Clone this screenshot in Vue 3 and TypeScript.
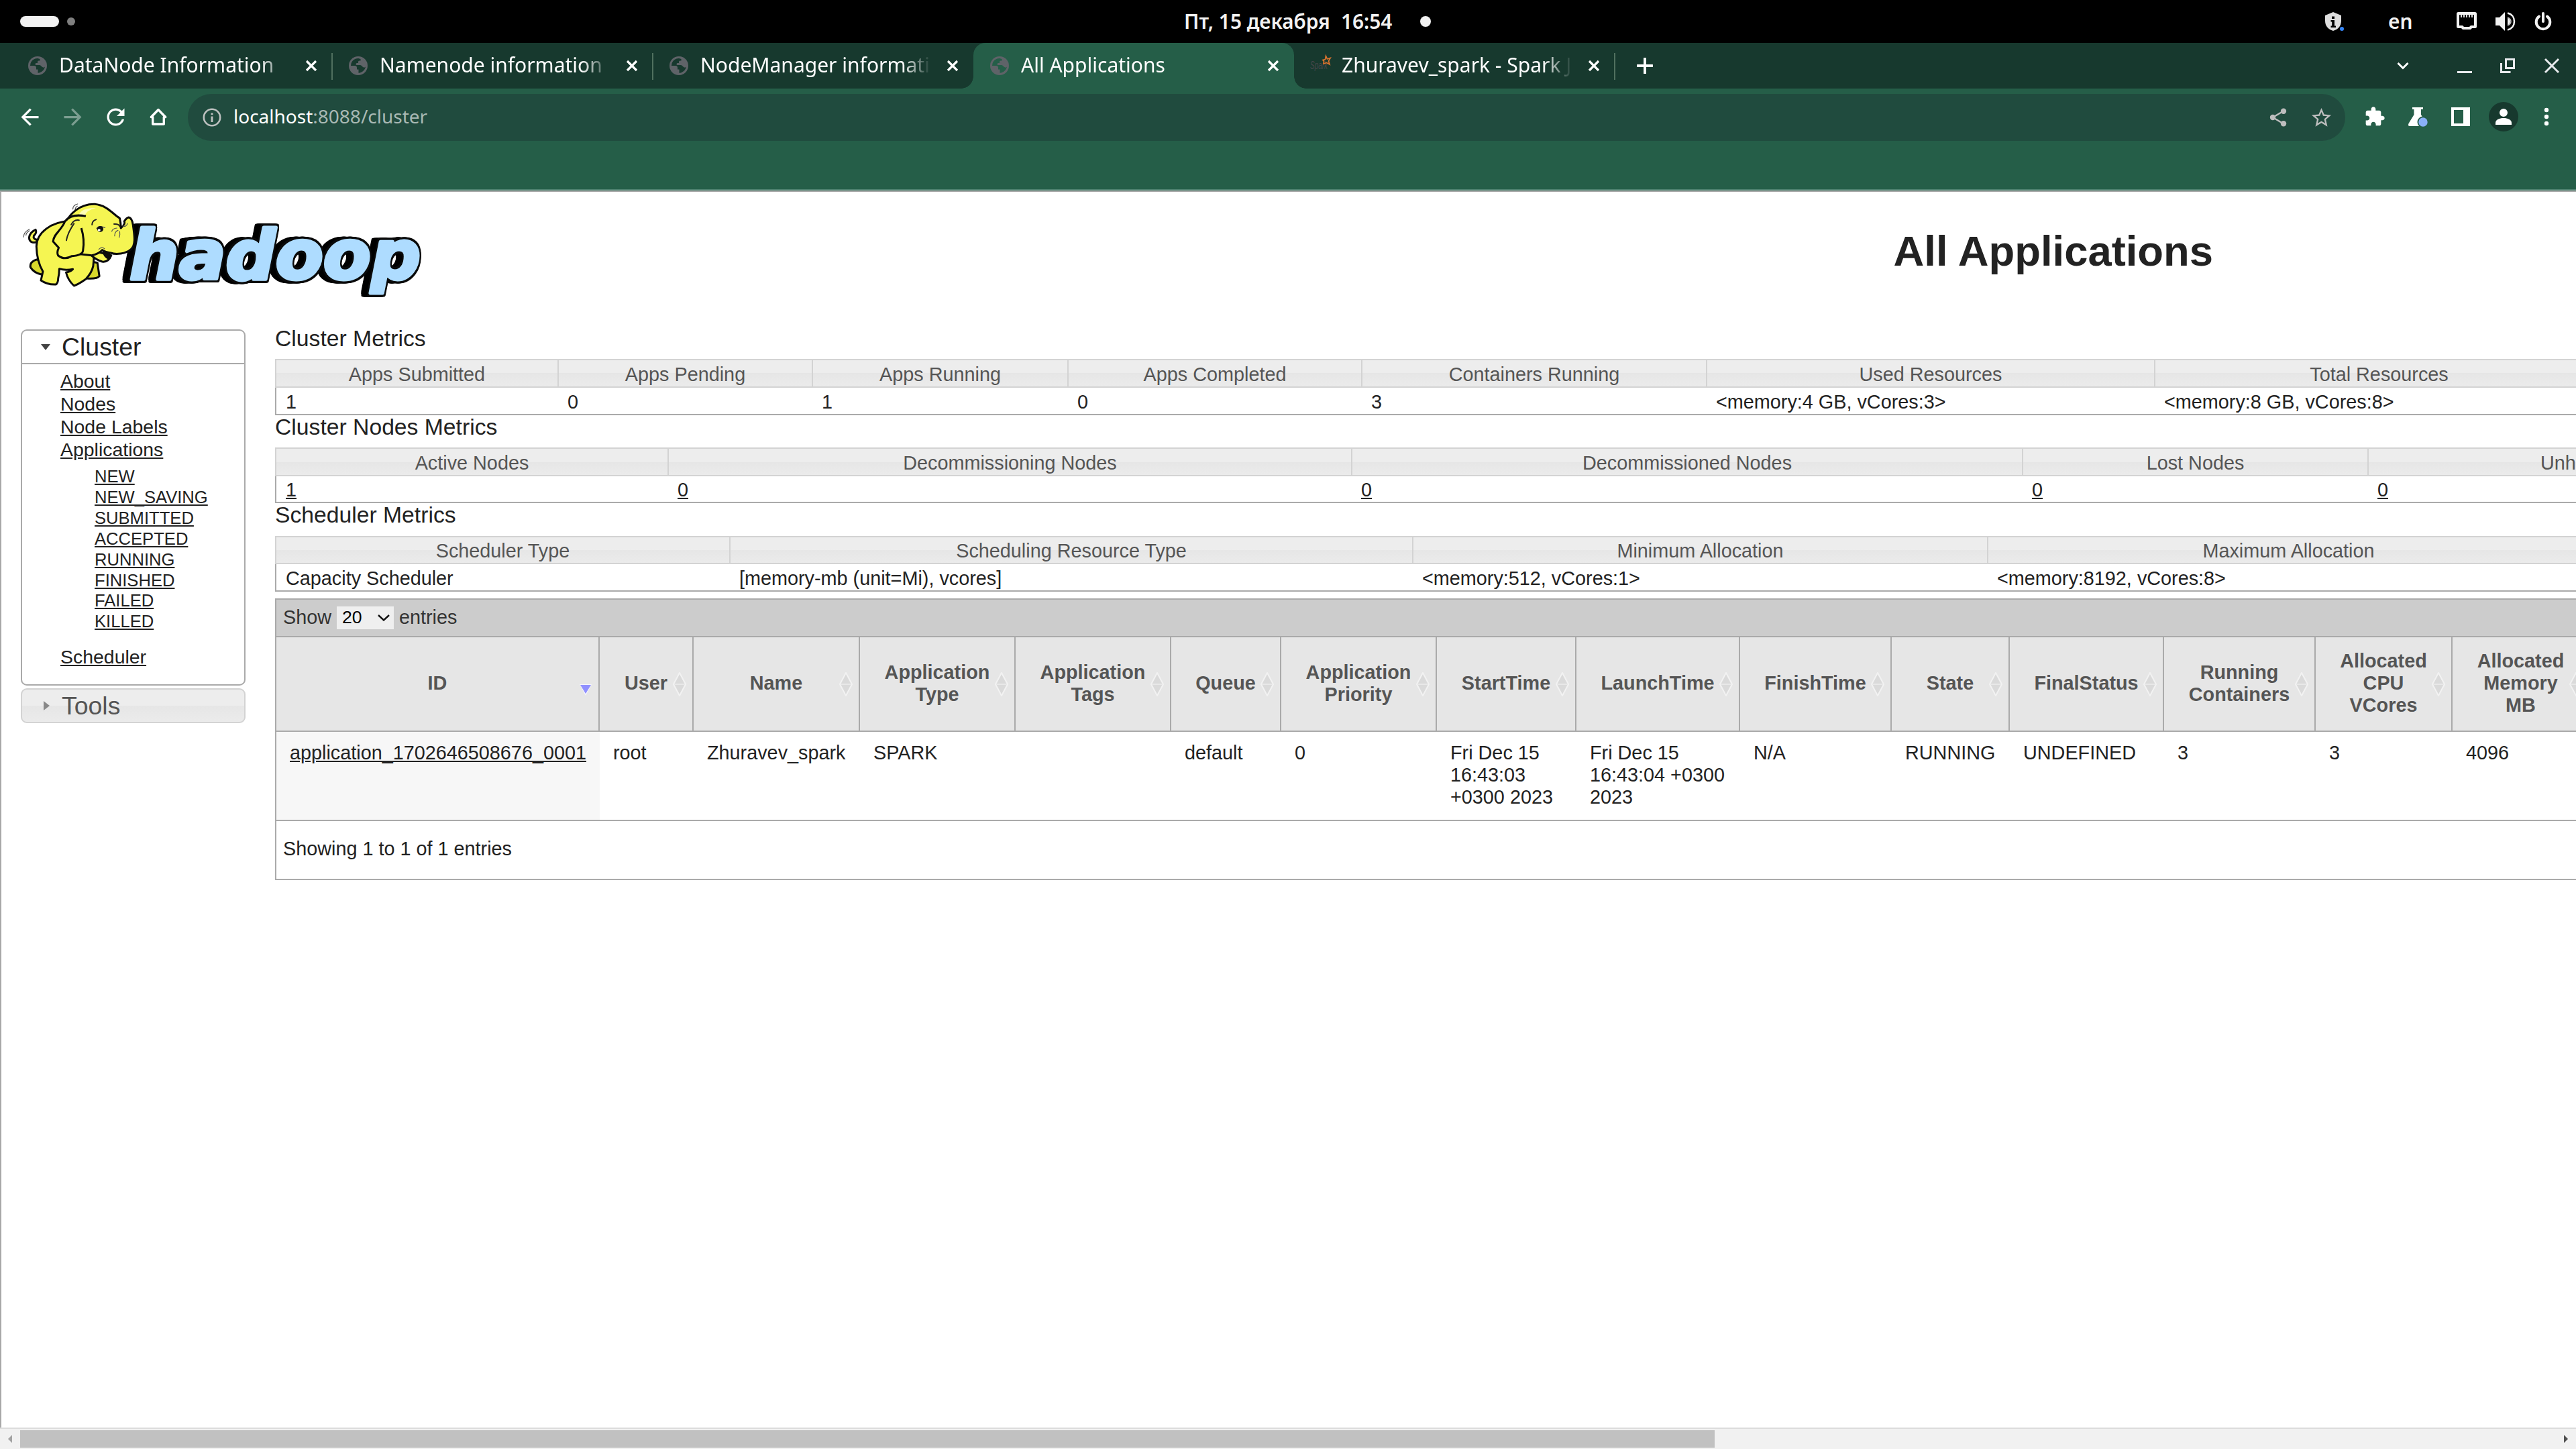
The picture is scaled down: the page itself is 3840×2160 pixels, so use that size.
<script setup lang="ts">
interface Tab {
  title: string
  icon: 'globe' | 'spark'
  active?: boolean
}

interface MetricCell {
  label: string
  value: string
  width: number
  link?: boolean
}

interface MetricTable {
  title: string
  kind: string
  cells: MetricCell[]
}

interface AppColumn {
  label: string[]
  value: string[]
  width: number
  sorted?: boolean
}

const tabs: Tab[] = [
  { title: 'DataNode Information', icon: 'globe' },
  { title: 'Namenode information', icon: 'globe' },
  { title: 'NodeManager informati', icon: 'globe' },
  { title: 'All Applications', icon: 'globe', active: true },
  { title: 'Zhuravev_spark - Spark J', icon: 'spark' },
]

const states: string[] = ['NEW', 'NEW_SAVING', 'SUBMITTED', 'ACCEPTED', 'RUNNING', 'FINISHED', 'FAILED', 'KILLED']

const metrics: MetricTable[] = [
  {
    title: 'Cluster Metrics',
    kind: 'cluster',
    cells: [
      { label: 'Apps Submitted', value: '1', width: 421 },
      { label: 'Apps Pending', value: '0', width: 379 },
      { label: 'Apps Running', value: '1', width: 381 },
      { label: 'Apps Completed', value: '0', width: 438 },
      { label: 'Containers Running', value: '3', width: 514 },
      { label: 'Used Resources', value: '<memory:4 GB, vCores:3>', width: 668 },
      { label: 'Total Resources', value: '<memory:8 GB, vCores:8>', width: 669 },
    ],
  },
  {
    title: 'Cluster Nodes Metrics',
    kind: 'nodes',
    cells: [
      { label: 'Active Nodes', value: '1', width: 585, link: true },
      { label: 'Decommissioning Nodes', value: '0', width: 1019, link: true },
      { label: 'Decommissioned Nodes', value: '0', width: 1000, link: true },
      { label: 'Lost Nodes', value: '0', width: 515, link: true },
      { label: 'Unhealthy Nodes', value: '0', width: 735, link: true },
    ],
  },
  {
    title: 'Scheduler Metrics',
    kind: 'scheduler',
    cells: [
      { label: 'Scheduler Type', value: 'Capacity Scheduler', width: 677 },
      { label: 'Scheduling Resource Type', value: '[memory-mb (unit=Mi), vcores]', width: 1018 },
      { label: 'Minimum Allocation', value: '<memory:512, vCores:1>', width: 857 },
      { label: 'Maximum Allocation', value: '<memory:8192, vCores:8>', width: 897 },
    ],
  },
]

const columns: AppColumn[] = [
  { label: ['ID'], value: ['application_1702646508676_0001'], width: 482, sorted: true },
  { label: ['User'], value: ['root'], width: 140 },
  { label: ['Name'], value: ['Zhuravev_spark'], width: 248 },
  { label: ['Application', 'Type'], value: ['SPARK'], width: 232 },
  { label: ['Application', 'Tags'], value: [], width: 232 },
  { label: ['Queue'], value: ['default'], width: 164 },
  { label: ['Application', 'Priority'], value: ['0'], width: 232 },
  { label: ['StartTime'], value: ['Fri Dec 15', '16:43:03', '+0300 2023'], width: 208 },
  { label: ['LaunchTime'], value: ['Fri Dec 15', '16:43:04 +0300', '2023'], width: 244 },
  { label: ['FinishTime'], value: ['N/A'], width: 226 },
  { label: ['State'], value: ['RUNNING'], width: 176 },
  { label: ['FinalStatus'], value: ['UNDEFINED'], width: 230 },
  { label: ['Running', 'Containers'], value: ['3'], width: 226 },
  { label: ['Allocated', 'CPU', 'VCores'], value: ['3'], width: 204 },
  { label: ['Allocated', 'Memory', 'MB'], value: ['4096'], width: 205 },
]
</script>

<template>
  <div class="desktop">
    <header class="panel">
      <div class="workspaces"><span class="ws-active"></span><span class="ws-dot"></span></div>
      <div class="clock"><span class="date">Пт, 15 декабря</span><span class="time">16:54</span><span class="notify"></span></div>
      <div class="tray">
        <svg class="tray-shield" width="30" height="30" viewBox="0 0 30 30">
          <path d="M13 1 L25 6 V14 C25 22 20 27 13 29 C6 27 1 22 1 14 V6 Z" fill="#dedede" />
          <path d="M11 7.5h4v3.5h-4zM9.500 13h5.500v8.500h2v2.500h-7.500v-2.500h1.700v-6h-1.700z" fill="#000" />
          <circle cx="26" cy="26" r="3" fill="#3584f4" />
        </svg>
        <span class="lang">en</span>
        <svg class="tray-net" width="30" height="28" viewBox="0 0 30 28">
          <path d="M2.500 0H27.500Q30 0 30 2.500V21.500Q30 24 27.500 24H23L21 26H9L7 24H2.500Q0 24 0 21.500V2.500Q0 0 2.500 0ZM4 4V20H9L11 22H19L21 20H26V4Z" fill="#f2f2f2" fill-rule="evenodd" />
          <path d="M7 4v4M11 4v4M15 4v4M19 4v4M23 4v4" stroke="#f2f2f2" stroke-width="1.800" />
        </svg>
        <svg class="tray-vol" width="30" height="28" viewBox="0 0 30 28">
          <path d="M0 8h6l8-8v28l-8-8H0z" fill="#f2f2f2" />
          <path d="M18 8q4 2 4 6t-4 6z" fill="#f2f2f2" />
          <path d="M18 1.500C24.500 3 28 8 28 14S24.500 25 18 26.500" fill="none" stroke="#f2f2f2" stroke-width="2.500" />
          <path d="M18 8q5 2 5 6t-5 6" fill="none" stroke="#bbb" stroke-width="1.500" />
        </svg>
        <svg class="tray-power" width="26" height="28" viewBox="0 0 26 28">
          <path d="M7 6.500A10.300 10.300 0 1 0 19 6.500" fill="none" stroke="#f2f2f2" stroke-width="4" stroke-linecap="round" />
          <path d="M13 2v12" stroke="#f2f2f2" stroke-width="4" stroke-linecap="round" />
        </svg>
      </div>
    </header>

    <nav class="tabstrip">
      <div v-for="tab in tabs" :key="tab.title" class="tab" :class="{ active: tab.active }">
        <svg v-if="tab.icon === 'globe'" class="tab-icon" width="28" height="28" viewBox="0 0 28 28">
          <circle cx="14" cy="14" r="14" fill="#5f6368" />
          <path class="land" d="M15 3.200C10 2.500 5.500 5.500 3.500 10.500L3 14H9Q12 14 12 17V19.500H14.500V24.800C20 24.300 24 20.500 25 15.500C24 17 22 17 20.500 15.500L19.500 14.500Q18.500 13 17 13H12Q10.500 13 10.500 11.500Q10.500 10 12 10H14V8Q14 6.500 15.500 6.500H17.500V4Z" />
        </svg>
        <svg v-else class="tab-icon spark" width="32" height="28" viewBox="0 0 32 28">
          <text x="1" y="21" class="spark-word" textLength="26" lengthAdjust="spacingAndGlyphs">Spark</text>
          <path d="M24.500 1.500L26.500 6L31 4.500L28.500 9L30 14L25.500 11.500L21 13L21.500 9L20 7.500L23.500 6.500Z" fill="none" stroke="#d9732e" stroke-width="1.800" />
        </svg>
        <span class="tab-title">{{ tab.title }}</span>
        <svg class="tab-close" width="18" height="18" viewBox="0 0 18 18"><path d="M2 2L16 16M16 2L2 16" stroke="#fff" stroke-width="3.200" /></svg>
      </div>
      <div class="new-tab">
        <svg width="24" height="24" viewBox="0 0 24 24"><path d="M12 1v22M1 12h22" stroke="#fff" stroke-width="4" stroke-linecap="round" /></svg>
      </div>
      <div class="window-controls">
        <span class="slot chevron"><svg width="20" height="14" viewBox="0 0 20 14"><path d="M2.500 3L10 10.500L17.500 3" fill="none" stroke="#fff" stroke-width="3" /></svg></span>
        <span class="slot"><svg width="22" height="24" viewBox="0 0 22 24"><path d="M0 21.500h22" stroke="#e8eaed" stroke-width="3" /></svg></span>
        <span class="slot"><svg width="22" height="24" viewBox="0 0 22 24"><path d="M8.500 2.500h12v13h-12zM1.500 8v13.500h14" fill="none" stroke="#e8eaed" stroke-width="3" /></svg></span>
        <span class="slot close"><svg width="24" height="24" viewBox="0 0 24 24"><path d="M2 2L22 22M22 2L2 22" stroke="#e8eaed" stroke-width="3" /></svg></span>
      </div>
    </nav>

    <div class="toolbar">
      <div class="nav-buttons">
        <span class="slot"><svg width="39" height="39" viewBox="0 0 24 24"><path fill="#fff" d="M20 11H7.830l5.590-5.590L12 4l-8 8 8 8 1.410-1.410L7.830 13H20v-2z" /></svg></span>
        <span class="slot"><svg width="39" height="39" viewBox="0 0 24 24"><path fill="#7c9e91" d="M4 11H16.170l-5.590-5.590L12 4l8 8-8 8-1.410-1.410L16.170 13H4v-2z" /></svg></span>
        <span class="slot"><svg width="41" height="39" viewBox="0 0 24 24"><path fill="#fff" d="M17.650 6.350C16.200 4.900 14.210 4 12 4c-4.420 0-7.990 3.580-7.990 8s3.570 8 7.990 8c3.730 0 6.840-2.550 7.730-6h-2.080c-.82 2.330-3.040 4-5.650 4-3.310 0-6-2.690-6-6s2.690-6 6-6c1.660 0 3.140.69 4.220 1.780L13 11h7V4l-2.350 2.350z" /></svg></span>
        <span class="slot"><svg width="28" height="28" viewBox="0 0 28 28"><path fill="none" stroke="#fff" stroke-width="3.400" stroke-linejoin="round" d="M14 3.500L3.300 14.500H5.700V25H22.300V14.500H24.700Z" /></svg></span>
      </div>
      <div class="omnibox">
        <svg class="info" width="28" height="28" viewBox="0 0 28 28">
          <circle cx="14" cy="14" r="12.200" fill="none" stroke="#bdc1c0" stroke-width="2.600" />
          <path d="M14 7.500v2.800M14 12.500v8.500" stroke="#bdc1c0" stroke-width="3" />
        </svg>
        <span class="url"><b>localhost</b>:8088/cluster</span>
        <div class="omni-actions">
          <span class="slot"><svg width="28" height="28" viewBox="0 0 28 28">
            <path d="M6 14L22 4.500M6 14L22 23.500" stroke="#bdbdbd" stroke-width="2.600" />
            <circle cx="6" cy="14" r="4.200" fill="#bdbdbd" /><circle cx="22" cy="4.800" r="4.200" fill="#bdbdbd" /><circle cx="22" cy="23.300" r="4.200" fill="#bdbdbd" />
          </svg></span>
          <span class="slot"><svg width="35" height="35" viewBox="0 0 24 24"><path fill="#bdbdbd" d="M22 9.240l-7.190-.62L12 2 9.190 8.630 2 9.240l5.460 4.730L5.820 21 12 17.270 18.180 21l-1.630-7.030L22 9.240zM12 15.400l-3.760 2.270 1-4.280-3.320-2.880 4.380-.38L12 6.100l1.710 4.040 4.380.38-3.320 2.880 1 4.280L12 15.400z" /></svg></span>
        </div>
      </div>
      <div class="extensions">
        <span class="slot"><svg width="32" height="32" viewBox="0 0 24 24"><path fill="#fff" d="M20.500 11H19V7c0-1.100-.9-2-2-2h-4V3.500C13 2.120 11.880 1 10.500 1S8 2.120 8 3.500V5H4c-1.100 0-1.990.9-1.990 2v3.800H3.500c1.490 0 2.700 1.210 2.700 2.700s-1.210 2.700-2.700 2.700H2V20c0 1.100.9 2 2 2h3.800v-1.500c0-1.490 1.210-2.700 2.700-2.700 1.490 0 2.700 1.210 2.700 2.700V22H17c1.100 0 2-.9 2-2v-4h1.500c1.380 0 2.500-1.120 2.500-2.500S21.880 11 20.500 11z" /></svg></span>
        <span class="slot"><svg width="32" height="30" viewBox="0 0 32 30">
          <path d="M8 1H24V4H21V12L29 25Q30 29 27 29H4Q1 29 2.500 25L10.500 12V4H8Z" fill="#fff" />
          <circle cx="24" cy="23" r="8.500" fill="#255e48" /><circle cx="24" cy="23" r="6.700" fill="#8ab0f8" />
        </svg></span>
        <span class="slot"><svg width="28" height="28" viewBox="0 0 28 28"><path fill="#fff" fill-rule="evenodd" d="M0 0H28V28H0ZM4 4V24H18V4Z" /></svg></span>
        <span class="slot"><svg width="44" height="44" viewBox="0 0 44 44">
          <circle cx="22" cy="22" r="22" fill="#17392e" /><circle cx="22" cy="16" r="6" fill="#fff" />
          <path d="M10 34V31C10 26.500 16 24 22 24S34 26.500 34 31V34Z" fill="#fff" />
        </svg></span>
        <span class="slot"><svg width="8" height="28" viewBox="0 0 8 28"><circle cx="4" cy="4" r="3.200" fill="#fff" /><circle cx="4" cy="14" r="3.200" fill="#fff" /><circle cx="4" cy="24" r="3.200" fill="#fff" /></svg></span>
      </div>
    </div>
    <div class="bookmarks"></div>

    <main class="page">
      <div class="page-head">
        <svg class="logo" width="660" height="200" viewBox="0 0 660 200">
          <text class="logo-word" x="193" y="136" textLength="434" lengthAdjust="spacingAndGlyphs">hadoop</text>
          <g class="elephant" transform="scale(0.42088 0.33333)">
            <path class="line thin" d="M258 95Q258 78 275 72M266 100Q266 88 274 82M84 220Q82 200 104 185M92 212Q92 202 104 192" />
            <path class="skin" d="M130 243Q104 250 103 222Q106 198 126 187Q132 200 120 214Q116 228 130 232Z" />
            <path class="skin dark" d="M132 320Q104 330 108 356Q122 382 148 388L165 350Z" />
            <path class="skin dark" d="M325 330L345 335L352 395Q345 408 306 405L300 360Z" />
            <path class="skin" d="M250 148C180 152 130 200 129 262C130 310 138 345 152 374L145 414Q168 434 198 432Q206 425 206 405Q210 385 210 362Q230 370 258 364Q250 376 234 378Q240 412 262 438Q280 430 304 408Q325 380 330 350L334 290Z" />
            <path class="skin" d="M340 285L320 298Q340 322 362 330Q384 334 394 302Z" />
            <path d="M362 278Q364 310 384 320Q393 310 390 294Q374 290 362 278Z" fill="#0b0b0b" />
            <path class="skin" d="M232 158C245 120 280 72 335 73C380 78 400 118 424 136Q428 155 428 180Q446 160 440 150Q448 134 456 132Q468 136 471 165C474 200 484 252 464 275C445 296 410 300 392 291Q374 288 362 278Q350 295 325 302L240 290Z" />
            <path d="M300 125Q306 100 340 90Q290 88 280 120Z" fill="#ffffd0" opacity=".8" />
            <path class="skin" d="M304 127C270 118 244 128 230 150C218 190 190 205 188 240L208 268Q200 290 206 303Q228 325 255 305Q292 302 294 280C300 235 294 205 288 180" />
            <path class="line" d="M252 165Q262 140 280 145M235 235Q240 200 262 160M326 165Q326 148 340 142M404 162Q420 160 424 172" />
            <path class="line thin" d="M396 195Q398 182 414 180M406 215Q406 195 418 190M422 222Q426 210 424 195M350 275Q360 262 370 272M342 182Q350 166 372 178M432 168Q445 180 452 160" />
            <ellipse cx="355" cy="184" rx="11" ry="13" fill="#111" /><circle cx="351" cy="189" r="5" fill="#fff" />
          </g>
        </svg>
        <h1>All Applications</h1>
      </div>

      <div class="columns">
        <aside class="sidebar">
          <section class="nav-open">
            <h3 class="nav-title"><i class="tri-down"></i>Cluster</h3>
            <ul class="links">
              <li><a>About</a></li>
              <li><a>Nodes</a></li>
              <li><a>Node Labels</a></li>
              <li><a>Applications</a>
                <ul class="sub-links">
                  <li v-for="s in states" :key="s"><a>{{ s }}</a></li>
                </ul>
              </li>
              <li><a>Scheduler</a></li>
            </ul>
          </section>
          <h3 class="nav-title nav-closed"><i class="tri-right"></i>Tools</h3>
        </aside>

        <div class="content">
          <section v-for="m in metrics" :key="m.kind" class="metric" :class="m.kind">
            <h3>{{ m.title }}</h3>
            <div class="metric-head">
              <div v-for="c in m.cells" :key="c.label" class="mh" :style="{ width: c.width + 'px' }">{{ c.label }}</div>
            </div>
            <div class="metric-row">
              <div v-for="c in m.cells" :key="c.label" class="mv" :style="{ width: c.width + 'px' }">
                <a v-if="c.link">{{ c.value }}</a><template v-else>{{ c.value }}</template>
              </div>
            </div>
          </section>

          <section class="apps">
            <div class="apps-bar">
              <span>Show</span>
              <span class="select">20<svg width="18" height="10" viewBox="0 0 18 10"><path d="M1 1L9 8.500L17 1" fill="none" stroke="#111" stroke-width="2.400" /></svg></span>
              <span>entries</span>
            </div>
            <div class="apps-head">
              <div v-for="(c, i) in columns" :key="i" class="ah" :style="{ width: c.width + 'px' }">
                <span v-for="l in c.label" :key="l">{{ l }}</span>
                <svg v-if="c.sorted" class="sort" width="20" height="36" viewBox="0 0 20 36"><path d="M1 18H19L10 35Z" fill="#f4f4ff" /><path d="M2 19H18L10 32Z" fill="#9090ff" /></svg>
                <svg v-else class="sort" width="20" height="36" viewBox="0 0 20 36"><path d="M10 1L19 18L10 35L1 18Z" fill="#dadada" stroke="#f2f2f2" stroke-width="2" /><path d="M2 18H18" stroke="#e8e8e8" stroke-width="2" /></svg>
              </div>
            </div>
            <div class="apps-row">
              <div v-for="(c, i) in columns" :key="i" class="av" :class="{ sorted: c.sorted }" :style="{ width: c.width + 'px' }">
                <component :is="c.sorted ? 'a' : 'span'" v-for="l in c.value" :key="l">{{ l }}</component>
              </div>
            </div>
            <div class="apps-foot">Showing 1 to 1 of 1 entries</div>
          </section>
        </div>
      </div>
    </main>

    <footer class="scrollbar">
      <span class="arrow"><svg width="8" height="12" viewBox="0 0 8 12"><path d="M7 0V12L1 6Z" fill="#a3a3a3" /></svg></span>
      <span class="track"><span class="thumb"></span></span>
      <span class="arrow"><svg width="8" height="12" viewBox="0 0 8 12"><path d="M1 0V12L7 6Z" fill="#505050" /></svg></span>
    </footer>
  </div>
</template>

<style>
body { margin: 0; background: #fff; }
</style>

<style scoped>
* { box-sizing: border-box; }
.desktop { width: 3840px; height: 2160px; overflow: hidden; display: flex; flex-direction: column; background: #fff; font-family: "Liberation Sans", Arial, sans-serif; color: #222; }
svg { display: block; flex: none; }
h1, h3, ul { margin: 0; padding: 0; font-weight: normal; }
ul { list-style: none; }
a { text-decoration: underline; }
.slot { width: 64px; display: flex; align-items: center; justify-content: center; flex: none; }

/* system panel */
.panel { height: 64px; flex: none; background: #000; display: grid; grid-template-columns: 1765px 1fr 374px; align-items: center; font-family: "Noto Sans", sans-serif; color: #f2f2f2; font-weight: 600; font-size: 29.800px; }
.workspaces { display: flex; align-items: center; gap: 12px; padding-left: 30px; }
.ws-active { width: 58px; height: 16px; border-radius: 8px; background: #f2f2f2; }
.ws-dot { width: 12px; height: 12px; border-radius: 6px; background: #7f7f7f; }
.clock { display: flex; align-items: center; line-height: 64px; white-space: nowrap; }
.date { width: 234px; }
.time { width: 118px; }
.notify { width: 16px; height: 16px; border-radius: 8px; background: #f2f2f2; }
.tray { display: flex; align-items: center; height: 64px; }
.tray-shield { margin-left: -1px; }
.lang { width: 36px; margin-left: 65px; line-height: 64px; }
.tray-net { margin-left: 66px; }
.tray-vol { margin-left: 28px; }
.tray-power { margin-left: 28px; }

/* tab strip */
.tabstrip { height: 68px; flex: none; background: #17392e; display: flex; padding-left: 17px; font-family: "Noto Sans", sans-serif; }
.tab { position: relative; width: 478px; flex: none; display: flex; align-items: center; padding-left: 25px; color: #fff; }
.tab::after { content: ""; position: absolute; right: -1px; top: 15px; width: 2px; height: 40px; background: #50705f; }
.tab.active::after, .tab:nth-child(3)::after { display: none; }
.tab.active { background: #255e48; border-radius: 18px 18px 0 0; }
.tab.active::before { content: ""; position: absolute; left: -18px; right: -18px; bottom: 0; height: 18px; background: radial-gradient(circle at 0 0, transparent 17.500px, #255e48 18px) left / 18px 18px no-repeat, radial-gradient(circle at 100% 0, transparent 17.500px, #255e48 18px) right / 18px 18px no-repeat; }
.land { fill: #17392e; }
.active .land { fill: #255e48; }
.tab-icon { margin-right: 18px; overflow: visible; }
.tab-icon.spark { margin-left: -2px; margin-right: 16px; margin-top: -4px; }
.spark-word { font: italic 17px "Liberation Sans", sans-serif; fill: #46474a; }
.tab-title { width: 344px; height: 68px; white-space: nowrap; font-size: 30px; line-height: 66px; margin-right: 23px; mask-image: linear-gradient(90deg, #000 300px, transparent 344px); }
.new-tab { width: 90px; display: flex; align-items: center; justify-content: center; }
.window-controls { margin-left: auto; padding-right: 3px; display: flex; }
.chevron { margin-right: 28px; }
.close { width: 67px; }

/* toolbar */
.toolbar { height: 84px; flex: none; background: #255e48; display: flex; padding-left: 12px; }
.nav-buttons, .extensions, .omni-actions { display: flex; }
.omnibox { margin: 8px 12px 6px; width: 3216px; height: 70px; border-radius: 35px; background: #204b3e; display: flex; align-items: center; padding: 0 4px 0 22px; }
.url { margin-left: 18px; height: 70px; font: 28px/67px "Noto Sans", sans-serif; color: #a9b9b4; white-space: nowrap; }
.url b { font-weight: 400; color: #fff; }
.omni-actions { margin-left: auto; height: 70px; }
.bookmarks { height: 68px; flex: none; background: #255e48; border-bottom: 2px solid #4f8270; }

/* page */
.page { flex: 1; border-top: 2px solid #a8a8a8; border-left: 2px solid #a8a8a8; min-height: 0; overflow: hidden; }
.page-head { height: 201px; display: flex; justify-content: space-between; padding-right: 541px; }
.logo { margin: -6px 0 0 -2px; }
.logo-word { font: italic 700 102px "DejaVu Sans", sans-serif; fill: #aedcff; stroke: #aedcff; stroke-width: 5px; stroke-linejoin: round; filter: drop-shadow(2px 0 0 #0a0a0a) drop-shadow(-2px 0 0 #0a0a0a) drop-shadow(0 3px 0 #0a0a0a) drop-shadow(0 -3px 0 #0a0a0a) drop-shadow(-9px 0 0 #000); }
.skin { fill: #f5f552; stroke: #0b0b0b; stroke-width: 3px; stroke-linejoin: round; vector-effect: non-scaling-stroke; }
.skin.dark { fill: #d8d82c; }
.line { fill: none; stroke: #222; stroke-width: 2px; stroke-linecap: round; vector-effect: non-scaling-stroke; }
.line.thin { stroke-width: 1.200px; stroke: #555; }
h1 { font-size: 63.360px; font-weight: 700; line-height: 176px; white-space: nowrap; }
.columns { display: flex; }
.sidebar { width: 335px; margin: 4px 44px 0 29px; flex: none; }
.nav-open { height: 531px; border: 2px solid #aaa; border-radius: 9px; margin-bottom: 4px; }
.nav-title { display: flex; align-items: center; height: 50px; padding: 0 0 0 28px; font-size: 37.440px; line-height: 48px; border-bottom: 2px solid #aaa; }
.nav-closed { height: 52px; border: 2px solid #d3d3d3; border-radius: 9px; color: #555; background: linear-gradient(#ededed 0 50%, #e6e6e6 50%, #ebebeb); }
.tri-down { border: 7px solid transparent; border-top: 9px solid #444; border-bottom: 0; margin-right: 17px; }
.tri-right { border: 7px solid transparent; border-left: 9px solid #888; border-right: 0; margin: 0 18px 0 4px; }
.links { padding: 8px 0 0 57px; font-size: 28.440px; line-height: 34.100px; }
.sub-links { padding: 8px 0 20px 51px; font-size: 25.600px; line-height: 30.850px; }
.content { width: 3460px; flex: none; }
.content .metric h3 { height: 48px; font-size: 33.700px; line-height: 35px; }
.content .scheduler h3 { height: 49px; }
.metric-head, .metric-row { display: flex; font-size: 28.800px; white-space: nowrap; }
.metric-head { height: 43px; border: 2px solid #d3d3d3; border-left: 0; color: #555; background: linear-gradient(#ededed 0 50%, #e6e6e6 50%, #ebebeb); }
.mh { flex: none; text-align: center; border-left: 2px solid #d3d3d3; line-height: 42px; }
.metric-row { height: 41px; border-bottom: 2px solid #aaa; border-left: 2px solid #aaa; }
.nodes .metric-row { height: 40px; }
.scheduler .metric-head { height: 42px; }
.scheduler .mh { line-height: 41px; }
.mv { flex: none; padding-left: 15px; line-height: 42px; }
.mv:first-child { padding-left: 14px; margin-right: -2px; }
.nodes .mv { line-height: 40px; }
.apps { margin-top: 10px; border: 2px solid #aaa; font-size: 28.800px; }
.apps-bar { height: 56px; border-bottom: 2px solid #aaa; background: #ccc; color: #333; display: flex; align-items: center; padding: 0 0 1px 10px; }
.select { width: 85px; height: 34px; margin: 0 8px 0 8px; padding: 0 6px 0 8px; background: #efefef; color: #000; font-size: 26.670px; line-height: 35px; display: flex; align-items: center; justify-content: space-between; }
.apps-bar > span:first-child { width: 72px; }
.apps-head { display: flex; height: 141px; border-bottom: 2px solid #aaa; background: #e6e6e6; color: #555; font-weight: 700; }
.ah { position: relative; flex: none; display: flex; flex-direction: column; align-items: center; justify-content: center; border-right: 2px solid #aaa; line-height: 33px; padding-bottom: 2px; }
.sort { position: absolute; right: 9px; top: 52px; }
.apps-row { display: flex; height: 133px; border-bottom: 2px solid #aaa; }
.av { flex: none; display: flex; flex-direction: column; padding: 15px 0 0 20px; line-height: 33px; white-space: nowrap; }
.av.sorted { background: #f7f7f7; }
.av.sorted a { align-self: flex-start; }
.apps-foot { height: 86px; padding-left: 10px; line-height: 83px; }

/* horizontal scroll bar */
.scrollbar { height: 32px; flex: none; display: flex; border-top: 2px solid #dcdcdc; background: #f1f1f1; }
.arrow { width: 30px; display: flex; align-items: center; justify-content: center; }
.track { flex: 1; display: flex; align-items: center; }
.thumb { width: 2526px; height: 26px; background: #c1c1c1; }
</style>
